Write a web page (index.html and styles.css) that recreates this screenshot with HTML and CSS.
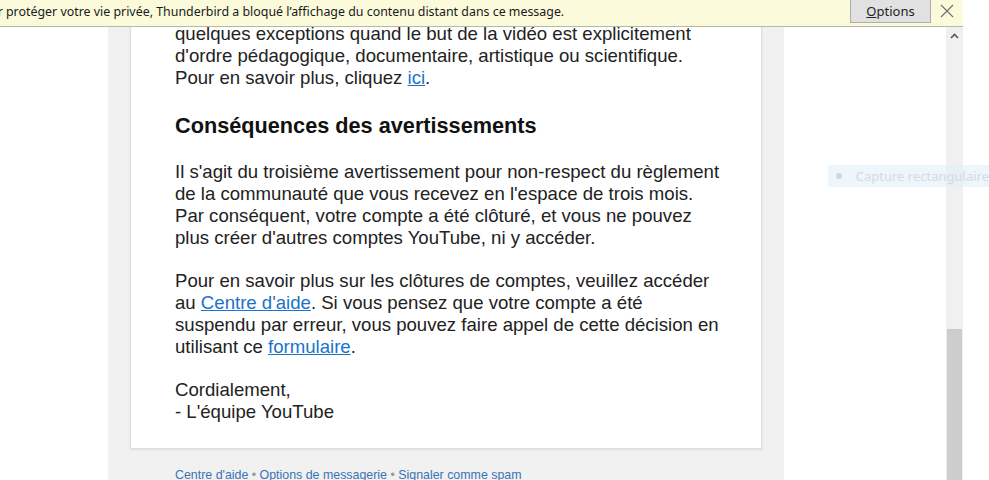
FILE: index.html
```html
<!DOCTYPE html>
<html lang="fr">
<head>
    <meta charset="UTF-8">
    <meta name="viewport" content="width=device-width, initial-scale=1.0">
    <title>Message</title>
    <link rel="stylesheet" href="styles.css">
</head>
<body>

<div class="window">
    <div class="main-column">
        <div class="notice-bar">
            <p class="notice-text">Pour protéger votre vie privée, Thunderbird a bloqué l’affichage du contenu distant dans ce message.</p>
            <button class="options-btn"><u>O</u>ptions</button>
            <span class="close-btn">
                <svg width="14" height="14" viewBox="0 0 14 14"><path d="M1 1 L13 13 M13 1 L1 13" stroke="#6d6d6d" stroke-width="1.1" fill="none"/></svg>
            </span>
        </div>

        <div class="pane">
            <div class="pane-content">
                <div class="mail-bg">
                    <div class="mail-card">
                        <p>quelques exceptions quand le but de la vidéo est explicitement d'ordre pédagogique, documentaire, artistique ou scientifique. Pour en savoir plus, cliquez <a href="#">ici</a>.</p>

                        <h2>Conséquences des avertissements</h2>

                        <p>Il s'agit du troisième avertissement pour non-respect du règlement de la communauté que vous recevez en l'espace de trois mois. Par conséquent, votre compte a été clôturé, et vous ne pouvez plus créer d'autres comptes YouTube, ni y accéder.</p>

                        <p>Pour en savoir plus sur les clôtures de comptes, veuillez accéder au <a href="#">Centre d'aide</a>. Si vous pensez que votre compte a été suspendu par erreur, vous pouvez faire appel de cette décision en utilisant ce <a href="#">formulaire</a>.</p>

                        <p>Cordialement,<br>- L'équipe YouTube</p>
                    </div>
                    <div class="mail-footer">
                        <a href="#">Centre d'aide</a> <span class="sep">•</span> <a href="#">Options de messagerie</a> <span class="sep">•</span> <a href="#">Signaler comme spam</a>
                    </div>
                </div>
            </div>
            <div class="scrollbar">
                <div class="scroll-up">
                    <svg width="9" height="6" viewBox="0 0 9 6"><path d="M1 5 L4.5 1.5 L8 5" stroke="#555" stroke-width="1.6" fill="none"/></svg>
                </div>
                <div class="scroll-track"></div>
                <div class="scroll-thumb"></div>
            </div>
        </div>
    </div>
    <div class="side-strip"></div>
</div>

<div class="capture-ghost">
    <span class="capture-dot"></span>
    <span>Capture rectangulaire</span>
</div>

</body>
</html>
```

FILE: styles.css
```css
body {
    margin: 0;
    font-family: "Liberation Sans", Arial, sans-serif;
    background: #fff;
    overflow: hidden;
}
.window {
    display: flex;
    height: 480px;
}
.main-column {
    width: 963px;
    display: flex;
    flex-direction: column;
}
.side-strip {
    flex: 1;
    background: #fff;
}
.notice-bar {
    height: 26px;
    background: #fbfbdc;
    border-bottom: 1px solid #b9b9a3;
    display: flex;
    align-items: flex-start;
    position: relative;
    z-index: 2;
}
.notice-text {
    margin: 0 0 0 -25px;
    font-family: "Noto Sans", sans-serif;
    font-size: 12.4px;
    line-height: 23px;
    color: #1a1a1a;
    flex: 1;
    white-space: nowrap;
    overflow: hidden;
}
.options-btn {
    width: 81px;
    height: 23px;
    margin: 0;
    padding: 0;
    background: #e1e1e1;
    border: 1px solid #adadad;
    border-top: none;
    font-family: "Noto Sans", sans-serif;
    font-size: 13px;
    color: #222;
}
.close-btn {
    width: 32px;
    display: flex;
    justify-content: center;
    padding-top: 4px;
}
.pane {
    flex: 1;
    display: flex;
    overflow: hidden;
}
.pane-content {
    flex: 1;
    overflow: hidden;
}
.mail-bg {
    margin-left: 108px;
    width: 676px;
    box-sizing: border-box;
    background: #f1f1f1;
    padding: 0 22px;
    margin-top: -30px;
    height: 600px;
}
.mail-card {
    background: #fff;
    border: 1px solid #dcdcdc;
    border-top: none;
    box-shadow: 0 1px 2px rgba(0, 0, 0, 0.08);
    padding: 26px 34px 25px 44px;
    color: #222;
    font-size: 18.6px;
    line-height: 22px;
}
.mail-card p {
    margin: 0 0 21px 0;
}
.mail-card p:last-child {
    margin-bottom: 0;
}
.mail-card h2 {
    font-size: 21.7px;
    line-height: 26px;
    margin: 24px 0 22px 0;
    color: #111;
}
.mail-card a {
    color: #1a73c9;
}
.mail-footer {
    padding: 19px 0 0 45px;
    font-size: 12.4px;
    line-height: 14px;
}
.mail-footer a {
    color: #3a73b8;
    text-decoration: none;
}
.mail-footer .sep {
    color: #999;
}
.scrollbar {
    width: 17px;
    background: #f0f0f0;
    display: flex;
    flex-direction: column;
}
.scroll-up {
    height: 17px;
    display: flex;
    justify-content: center;
    align-items: center;
}
.scroll-track {
    height: 285px;
}
.scroll-thumb {
    flex: 1;
    background: #cdcdcd;
    margin: 0 1px;
}
.capture-ghost {
    position: absolute;
    left: 828px;
    top: 165px;
    width: 161px;
    height: 22px;
    background: rgba(225, 238, 252, 0.6);
    display: flex;
    align-items: center;
    gap: 14px;
    padding-left: 8px;
    font-family: "Noto Sans", sans-serif;
    font-size: 13px;
    color: #d5dbe2;
    box-sizing: border-box;
    white-space: nowrap;
    overflow: hidden;
}
.capture-dot {
    width: 6px;
    height: 6px;
    border-radius: 50%;
    background: #d0d8e2;
}
```
